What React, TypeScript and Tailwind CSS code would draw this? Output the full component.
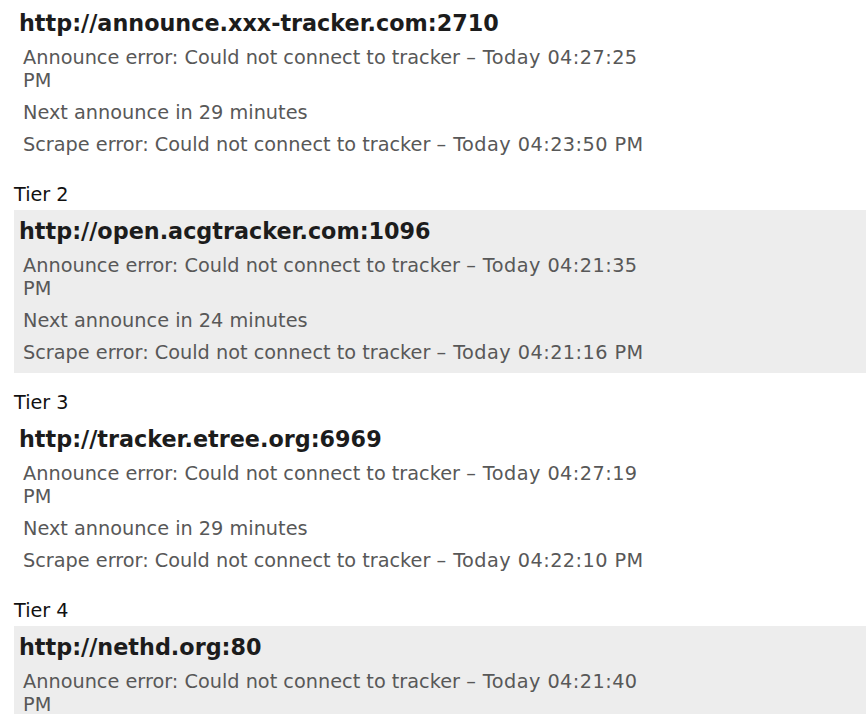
import React from "react";

type Tracker = {
  tier?: string;
  url: string;
  announce: [string, string, string?];
  next: string;
  scrape?: [string, string];
  shaded: boolean;
};

const trackers: Tracker[] = [
  {
    url: "http://announce.xxx-tracker.com:2710",
    announce: ["Announce error: Could not connect to tracker", "Today 04:27:25", "PM"],
    next: "Next announce in 29 minutes",
    scrape: ["Scrape error: Could not connect to tracker", "Today 04:23:50 PM"],
    shaded: false,
  },
  {
    tier: "Tier 2",
    url: "http://open.acgtracker.com:1096",
    announce: ["Announce error: Could not connect to tracker", "Today 04:21:35", "PM"],
    next: "Next announce in 24 minutes",
    scrape: ["Scrape error: Could not connect to tracker", "Today 04:21:16 PM"],
    shaded: true,
  },
  {
    tier: "Tier 3",
    url: "http://tracker.etree.org:6969",
    announce: ["Announce error: Could not connect to tracker", "Today 04:27:19", "PM"],
    next: "Next announce in 29 minutes",
    scrape: ["Scrape error: Could not connect to tracker", "Today 04:22:10 PM"],
    shaded: false,
  },
  {
    tier: "Tier 4",
    url: "http://nethd.org:80",
    announce: ["Announce error: Could not connect to tracker", "Today 04:21:40", "PM"],
    next: "Next announce in 29 minutes",
    scrape: ["Scrape error: Could not connect to tracker", "Today 04:21:58 PM"],
    shaded: true,
  },
];

const detailCls = "mt-[9px] w-[650px] pl-[4px] text-[19.3px] leading-[23px] text-[#585858]";

function Timed({ head, time, tail }: { head: string; time: string; tail?: string }) {
  return (
    <p className={detailCls}>
      {head} <span className="tracking-[0.45px]">– {time}</span>
      {tail && (
        <>
          <br />
          {tail}
        </>
      )}
    </p>
  );
}

export default function App() {
  return (
    <div
      className="h-[714px] w-[866px] overflow-hidden bg-white pt-[2px] pl-[14px]"
      style={{ fontFamily: '"DejaVu Sans", "Liberation Sans", sans-serif' }}
    >
      {trackers.map((t, i) => (
        <div key={i} className={i === 0 ? "" : "mt-[18px]"}>
          {t.tier && (
            <div className="text-[19.2px] leading-[23px] text-[#111111]">{t.tier}</div>
          )}
          <div
            className={`${t.tier ? "mt-[4px]" : ""} w-[900px] pt-[7px] pb-[9px] pl-[5px] ${
              t.shaded ? "bg-[#ededed]" : "bg-white"
            }`}
          >
            <div className="text-[22.3px] font-bold leading-[28px] text-[#1c1c1c]">{t.url}</div>
            <Timed head={t.announce[0]} time={t.announce[1]} tail={t.announce[2]} />
            <p className={detailCls}>{t.next}</p>
            {t.scrape && <Timed head={t.scrape[0]} time={t.scrape[1]} />}
          </div>
        </div>
      ))}
    </div>
  );
}
